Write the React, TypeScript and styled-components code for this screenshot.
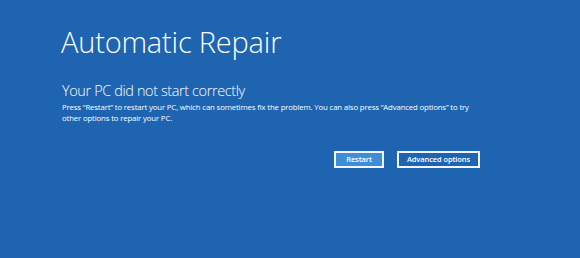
import React from "react";
import styled, { createGlobalStyle } from "styled-components";

const Global = createGlobalStyle`
  html, body { margin: 0; padding: 0; background: #1e64b1; }
  body { width: 580px; height: 258px; overflow: hidden; font-family: "Open Sans", "Noto Sans", sans-serif; color: #fff; }
`;

const Screen = styled.main`
  width: 580px;
  height: 258px;
  box-sizing: border-box;
  background: #1e64b1;
  padding: 22px 0 0 61px;
  display: flex;
  flex-direction: column;
`;

const Title = styled.h1`
  margin: 0;
  font-weight: 300;
  font-size: 29px;
  line-height: 40px;
  letter-spacing: -0.2px;
`;

const Subtitle = styled.h2`
  margin: 19px 0 0 1px;
  font-weight: 300;
  font-size: 14.5px;
  line-height: 20px;
  letter-spacing: -0.4px;
`;

const Body = styled.p`
  margin: 1px 0 0 1px;
  width: 412px;
  font-size: 7.8px;
  line-height: 11px;
  letter-spacing: -0.15px;
`;

const Actions = styled.div`
  display: flex;
  gap: 13px;
  margin: 27px 0 0 273px;
`;

const Button = styled.button<{ $primary?: boolean }>`
  box-sizing: border-box;
  height: 17px;
  width: ${(p) => (p.$primary ? "50px" : "83px")};
  padding: 0;
  border: 2px solid #f2f6fb;
  background: ${(p) => (p.$primary ? "#3d8ed6" : "transparent")};
  color: #fff;
  font-family: "Open Sans", "Noto Sans", sans-serif;
  font-weight: 600;
  font-size: 7.5px;
  line-height: 13px;
  letter-spacing: -0.1px;
`;

export default function App() {
  return (
    <>
      <Global />
      <Screen>
        <Title>Automatic Repair</Title>
        <Subtitle>Your PC did not start correctly</Subtitle>
        <Body>
          Press “Restart” to restart your PC, which can sometimes fix the problem. You can also press “Advanced options” to try other options to repair your PC.
        </Body>
        <Actions>
          <Button $primary>Restart</Button>
          <Button>Advanced options</Button>
        </Actions>
      </Screen>
    </>
  );
}
